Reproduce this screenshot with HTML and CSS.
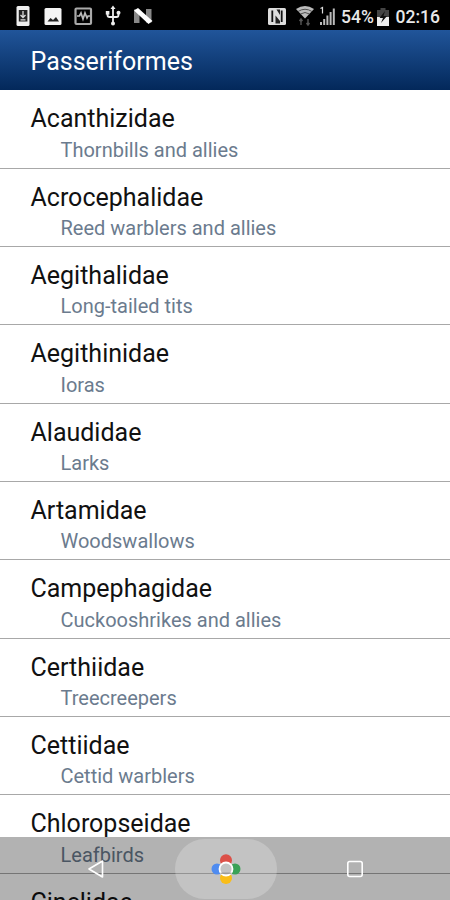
FILE: index.html
```html
<!DOCTYPE html>
<html lang="en">
<head>
    <meta charset="UTF-8">
    <meta name="viewport" content="width=device-width, initial-scale=1.0">
    <title>Passeriformes</title>
    <link rel="stylesheet" href="styles.css">
</head>
<body>
    <div class="status-bar">
        <svg class="status-icons" width="160" height="30" viewBox="0 0 160 30">
            <!-- download -->
            <rect x="16.5" y="6" width="13" height="20" rx="1.5" fill="#eee"/>
            <rect x="18.8" y="10" width="8.6" height="11.5" fill="#222"/>
            <path d="M23 11v6M20.5 15l2.5 2.5 2.5-2.5M20.5 19.8h5" fill="none" stroke="#ddd" stroke-width="1.3"/>
            <!-- picture -->
            <rect x="44.5" y="8" width="17" height="17" rx="1.5" fill="#f4f4f4"/>
            <path d="M47.5 21.5l3-3.5 2.5 2 3-3 3 4.500z" fill="#222"/>
            <!-- activity -->
            <rect x="75.5" y="8.5" width="15.5" height="15.5" rx="1" fill="none" stroke="#aaa" stroke-width="2.2"/>
            <path d="M77 16h2.5l1.5-3 2 6 2-6 2 5 1-2h2" fill="none" stroke="#bbb" stroke-width="1.7"/>
            <!-- usb -->
            <path d="M113 8v16M107.5 12v3q0 2 2 2h7q2 0 2-2v-3" fill="none" stroke="#eee" stroke-width="1.8"/>
            <path d="M110.5 9l2.5-3.5 2.5 3.500z" fill="#eee"/>
            <rect x="105.8" y="11" width="3.6" height="3.6" fill="#eee"/>
            <circle cx="118.5" cy="12.8" r="2" fill="#eee"/>
            <circle cx="113" cy="23.5" r="2" fill="#eee"/>
            <!-- android n -->
            <path d="M134 9.5h5.5V23H134zM146 9h5.5v13.5H146z" fill="#888"/>
            <path d="M134 10.5l4-2.5 14.5 13-4 3z" fill="#fff"/>
        </svg>
        <div class="status-right">
            <svg width="79" height="30" viewBox="261 0 79 30">
                <!-- nfc -->
                <rect x="268" y="8" width="18" height="17" rx="1.5" fill="#ddd"/>
                <path d="M272.3 10.5V22M281.7 10.5V22" fill="none" stroke="#111" stroke-width="1.8"/>
                <path d="M275.5 15.5l4.500 5.500v2.500h-4.500zM276.500 9.500h3.500v5.500z" fill="#222"/>
                <!-- wifi -->
                <path d="M296 9q9-6 18 0l-9 9.5z" fill="#bbb"/>
                <path d="M298 11.5q7-4.500 14 0M300.5 14q4.500-3 9 0" fill="none" stroke="#444" stroke-width="0.9"/>
                <path d="M301 19v6M299.5 21l1.5-2 1.5 2M308 19v6M306.5 23l1.5 2 1.5-2" fill="none" stroke="#555" stroke-width="1.4"/>
                <!-- signal -->
                <path d="M320.5 8.5l2-1v6" fill="none" stroke="#ddd" stroke-width="1.2"/>
                <path d="M320 22h2v3h-2zM323.2 19h2v6h-2zM326.4 15.5h2V25h-2zM329.6 12h2v13h-2zM332.8 8.5h2V25h-2z" fill="#bbb"/>
            </svg>
            <span class="battery-level">54%</span>
            <svg class="battery" width="14" height="20" viewBox="0 0 14 20">
                <path d="M4.500 1h5v2H13v8H1V3h3.500z" fill="#444"/>
                <path d="M1 10h12v9H1z" fill="#eee"/>
                <path d="M9 4l-5.500 7H7l-2 5 6-7H7.500z" fill="#111"/>
            </svg>
            <span class="clock">02:16</span>
        </div>
    </div>

    <header>
        <h1>Passeriformes</h1>
    </header>

    <ul class="family-list">
        <li><h2>Acanthizidae</h2><p>Thornbills and allies</p></li>
        <li><h2>Acrocephalidae</h2><p>Reed warblers and allies</p></li>
        <li><h2>Aegithalidae</h2><p>Long-tailed tits</p></li>
        <li><h2>Aegithinidae</h2><p>Ioras</p></li>
        <li><h2>Alaudidae</h2><p>Larks</p></li>
        <li><h2>Artamidae</h2><p>Woodswallows</p></li>
        <li><h2>Campephagidae</h2><p>Cuckooshrikes and allies</p></li>
        <li><h2>Certhiidae</h2><p>Treecreepers</p></li>
        <li><h2>Cettiidae</h2><p>Cettid warblers</p></li>
        <li><h2>Chloropseidae</h2><p>Leafbirds</p></li>
        <li><h2>Cinclidae</h2></li>
    </ul>

    <nav class="nav-bar">
        <svg width="20" height="20" viewBox="0 0 20 20">
            <path d="M16.5 2v16L3 10z" fill="none" stroke="#fff" stroke-width="1.6" stroke-linejoin="round"/>
        </svg>
        <div class="home">
            <svg width="32" height="32" viewBox="0 0 32 32">
                <circle cx="16" cy="7.3" r="6" fill="#dc5048"/>
                <circle cx="7" cy="16" r="5.5" fill="#4f8cf0"/>
                <circle cx="25" cy="16" r="5.5" fill="#3aa257"/>
                <circle cx="16" cy="25" r="6" fill="#f9bd18"/>
                <circle cx="16" cy="16" r="6.5" fill="#c4c4c4" stroke="#fff" stroke-width="1.8"/>
                <path d="M10.5 20.2h11" stroke="#888" stroke-width="1"/>
            </svg>
        </div>
        <svg width="20" height="20" viewBox="0 0 20 20">
            <rect x="2.8" y="2.5" width="14.4" height="15" rx="2" fill="none" stroke="#fff" stroke-width="1.6"/>
        </svg>
    </nav>
</body>
</html>
```

FILE: styles.css
```css
* {
    margin: 0;
    padding: 0;
    box-sizing: border-box;
}

body {
    font-family: Roboto, sans-serif;
    background-color: #fff;
    height: 900px;
    overflow: hidden;
}

.status-bar {
    display: flex;
    justify-content: space-between;
    height: 30px;
    background-color: #000;
    color: #e8e8e8;
}

.status-right {
    display: flex;
    align-items: center;
    padding-right: 10px;
    font-size: 17.5px;
    font-weight: 500;
}

.battery-level {
    width: 36px;
    padding: 4px 0 0 1px;
    white-space: nowrap;
}

.battery {
    margin-top: 3px;
}

.clock {
    width: 50px;
    padding-top: 4px;
    text-align: right;
    white-space: nowrap;
}

header {
    display: flex;
    align-items: center;
    height: 60px;
    padding: 3px 30.5px 0;
    background: linear-gradient(#21559a, #03285a);
}

h1 {
    color: #fff;
    font-size: 25px;
    font-weight: 400;
}

.family-list {
    height: 810px;
    padding-top: 0.3px;
    list-style: none;
    overflow: hidden;
}

.family-list li {
    height: 78.33px;
    padding: 14px 30.5px 0;
    border-bottom: 1px solid #a8a8a8;
}

h2 {
    color: #111;
    font-size: 25px;
    font-weight: 400;
    line-height: 30px;
}

.family-list p {
    padding: 3.5px 0 0 30px;
    color: #6b7b8e;
    font-size: 20px;
    line-height: 24px;
}

.nav-bar {
    position: fixed;
    bottom: 0;
    left: 0;
    display: flex;
    align-items: center;
    justify-content: space-between;
    width: 100%;
    height: 63px;
    padding: 0 85px 0 86px;
    background-color: rgba(0, 0, 0, 0.3);
}

.home {
    display: flex;
    align-items: center;
    justify-content: center;
    width: 102px;
    height: 60px;
    border-radius: 30px;
    background-color: rgba(255, 255, 255, 0.22);
}
```
